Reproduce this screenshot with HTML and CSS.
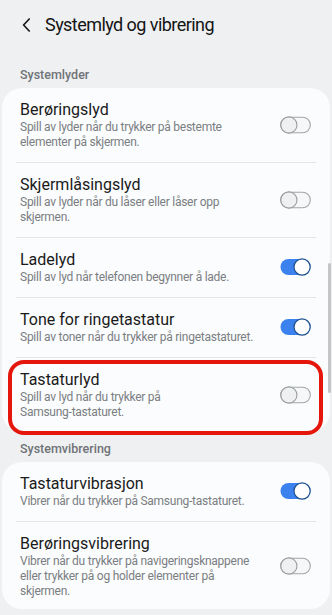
FILE: index.html
```html
<!DOCTYPE html>
<html lang="no">
<head>
<meta charset="utf-8">
<title>Systemlyd og vibrering</title>
<link rel="stylesheet" href="styles.css">
</head>
<body>
<header class="appbar">
  <svg class="back" width="9" height="14" viewBox="0 0 9 14"><path d="M7.2 1 L1.6 7 L7.2 13" fill="none" stroke="#1b1b1b" stroke-width="1.7" stroke-linecap="round" stroke-linejoin="round"/></svg>
  <h1 class="title">Systemlyd og vibrering</h1>
</header>

<div class="section-label">Systemlyder</div>
<section class="card">
  <div class="row">
    <div class="text">
      <div class="row-title">Berøringslyd</div>
      <div class="row-sub">Spill av lyder når du trykker på bestemte elementer på skjermen.</div>
    </div>
    <svg class="toggle" width="31" height="18" viewBox="0 0 31 18"><rect x="0.7" y="1.2" width="29.6" height="15.6" rx="7.8" fill="#f6f7f8" stroke="#a3a6a9" stroke-width="1.1"/><circle cx="8.9" cy="9" r="8.1" fill="#eef0f1" stroke="#9a9da0" stroke-width="1.1"/></svg>
  </div>
  <div class="divider"></div>
  <div class="row">
    <div class="text">
      <div class="row-title">Skjermlåsingslyd</div>
      <div class="row-sub">Spill av lyder når du låser eller låser opp skjermen.</div>
    </div>
    <svg class="toggle" width="31" height="18" viewBox="0 0 31 18"><rect x="0.7" y="1.2" width="29.6" height="15.6" rx="7.8" fill="#f6f7f8" stroke="#a3a6a9" stroke-width="1.1"/><circle cx="8.9" cy="9" r="8.1" fill="#eef0f1" stroke="#9a9da0" stroke-width="1.1"/></svg>
  </div>
  <div class="divider"></div>
  <div class="row">
    <div class="text">
      <div class="row-title">Ladelyd</div>
      <div class="row-sub">Spill av lyd når telefonen begynner å lade.</div>
    </div>
    <svg class="toggle" width="31" height="18" viewBox="0 0 31 18"><rect x="0.5" y="1" width="30" height="16" rx="8" fill="#3b82ef"/><circle cx="22.1" cy="9" r="8.1" fill="#ffffff" stroke="#1d4f8c" stroke-width="1.2"/></svg>
  </div>
  <div class="divider"></div>
  <div class="row">
    <div class="text">
      <div class="row-title">Tone for ringetastatur</div>
      <div class="row-sub">Spill av toner når du trykker på ringetastaturet.</div>
    </div>
    <svg class="toggle" width="31" height="18" viewBox="0 0 31 18"><rect x="0.5" y="1" width="30" height="16" rx="8" fill="#3b82ef"/><circle cx="22.1" cy="9" r="8.1" fill="#ffffff" stroke="#1d4f8c" stroke-width="1.2"/></svg>
  </div>
  <div class="divider"></div>
  <div class="row highlighted">
    <div class="text">
      <div class="row-title">Tastaturlyd</div>
      <div class="row-sub">Spill av lyd når du trykker på <span class="nowrap">Samsung-tastaturet.</span></div>
    </div>
    <svg class="toggle" width="31" height="18" viewBox="0 0 31 18"><rect x="0.7" y="1.2" width="29.6" height="15.6" rx="7.8" fill="#f6f7f8" stroke="#a3a6a9" stroke-width="1.1"/><circle cx="8.9" cy="9" r="8.1" fill="#eef0f1" stroke="#9a9da0" stroke-width="1.1"/></svg>
    <div class="marker"></div>
  </div>
</section>

<div class="section-label second">Systemvibrering</div>
<section class="card">
  <div class="row">
    <div class="text">
      <div class="row-title">Tastaturvibrasjon</div>
      <div class="row-sub">Vibrer når du trykker på <span class="nowrap">Samsung-tastaturet.</span></div>
    </div>
    <svg class="toggle" width="31" height="18" viewBox="0 0 31 18"><rect x="0.5" y="1" width="30" height="16" rx="8" fill="#3b82ef"/><circle cx="22.1" cy="9" r="8.1" fill="#ffffff" stroke="#1d4f8c" stroke-width="1.2"/></svg>
  </div>
  <div class="divider"></div>
  <div class="row last">
    <div class="text">
      <div class="row-title">Berøringsvibrering</div>
      <div class="row-sub">Vibrer når du trykker på navigeringsknappene eller trykker på og holder elementer på skjermen.</div>
    </div>
    <svg class="toggle" width="31" height="18" viewBox="0 0 31 18"><rect x="0.7" y="1.2" width="29.6" height="15.6" rx="7.8" fill="#f6f7f8" stroke="#a3a6a9" stroke-width="1.1"/><circle cx="8.9" cy="9" r="8.1" fill="#eef0f1" stroke="#9a9da0" stroke-width="1.1"/></svg>
  </div>
</section>

<div class="scrollbar"></div>
</body>
</html>
```

FILE: styles.css
```css
html, body {
  margin: 0;
  padding: 0;
}

body {
  background: #eef0f2;
  font-family: Roboto, "Noto Sans", "Liberation Sans", sans-serif;
  color: #1b1b1b;
  width: 332px;
  height: 615px;
  overflow: hidden;
  position: relative;
}

.appbar {
  display: flex;
  align-items: center;
  padding: 13px 0 0 22px;
  height: 24px;
}

.back {
  display: block;
  flex: none;
}

.title {
  margin: 0 0 0 14px;
  font-size: 18px;
  line-height: 24px;
  font-weight: 400;
  letter-spacing: -0.55px;
  color: #141414;
}

.section-label {
  margin: 30px 0 5px 20px;
  font-size: 12.5px;
  line-height: 16px;
  font-weight: 500;
  color: #6f7377;
}

.section-label.second {
  margin-top: 9px;
}

.card {
  margin: 0 2px;
  background: #fafcfd;
  border-radius: 20px;
}

.row {
  display: flex;
  align-items: center;
  padding: 12px 19px 12px 18px;
}

.row.highlighted {
  position: relative;
}

.row.last {
  padding-bottom: 10px;
}

.text {
  flex: 1;
  min-width: 0;
  margin-right: 20px;
}

.row-title {
  font-size: 16px;
  line-height: 20px;
  color: #1a1a1a;
}

.row-sub {
  font-size: 12px;
  line-height: 15px;
  letter-spacing: -0.25px;
  color: #7b7e82;
}

.nowrap {
  white-space: nowrap;
}

.toggle {
  display: block;
  flex: none;
  margin-top: -1px;
}

.divider {
  height: 1px;
  margin: 0 14px;
  background: #e3e5e7;
}

.marker {
  position: absolute;
  top: 2px;
  left: 6px;
  right: 7px;
  bottom: -3px;
  border: 4px solid #e5170d;
  border-radius: 16px;
  pointer-events: none;
}

.scrollbar {
  position: absolute;
  top: 263px;
  right: 1px;
  width: 3px;
  height: 130px;
  border-radius: 2px;
  background: #c3c5c7;
}
```
